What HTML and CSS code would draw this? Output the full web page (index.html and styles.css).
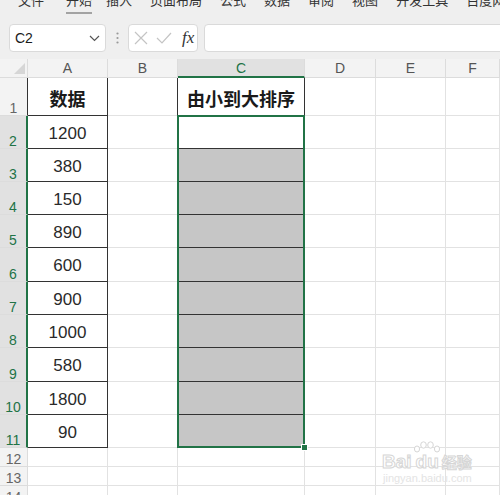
FILE: index.html
```html
<!DOCTYPE html>
<html lang="zh">
<head>
<meta charset="utf-8">
<title>排序</title>
<link rel="stylesheet" href="styles.css">
</head>
<body>
<div class="tabs">
  <span class="tab">文件</span>
  <span class="tab active">开始</span>
  <span class="tab">插入</span>
  <span class="tab">页面布局</span>
  <span class="tab">公式</span>
  <span class="tab">数据</span>
  <span class="tab">审阅</span>
  <span class="tab">视图</span>
  <span class="tab">开发工具</span>
  <span class="tab">百度网盘</span>
</div>
<div class="fbar">
  <div class="namebox">
    <span>C2</span>
    <svg width="11" height="7" viewBox="0 0 11 7"><path d="M1 1 L5.5 5.5 L10 1" fill="none" stroke="#555" stroke-width="1.2"/></svg>
  </div>
  <div class="dots">
    <svg width="3" height="12" viewBox="0 0 3 12"><circle cx="1.5" cy="1.5" r="1.1" fill="#999"/><circle cx="1.5" cy="6" r="1.1" fill="#999"/><circle cx="1.5" cy="10.5" r="1.1" fill="#999"/></svg>
  </div>
  <div class="fxbox">
    <svg width="14" height="14" viewBox="0 0 14 14"><path d="M1 1 L13 13 M13 1 L1 13" stroke="#c4c4c4" stroke-width="1.2"/></svg>
    <svg width="16" height="12" viewBox="0 0 16 12"><path d="M1 6 L6 11 L15 1" fill="none" stroke="#c4c4c4" stroke-width="1.2"/></svg>
    <span class="fx">fx</span>
  </div>
  <div class="finput"></div>
</div>
<div class="sheet">
  <div class="grid">
    <div class="c corner"><svg width="11" height="11" viewBox="0 0 11 11"><path d="M11 0 L11 11 L0 11 Z" fill="#d6d6d6"/></svg></div>
    <div class="c ch">A</div><div class="c ch">B</div><div class="c ch sel">C</div><div class="c ch">D</div><div class="c ch">E</div><div class="c ch">F</div>

    <div class="c rh dr">1</div><div class="c a head">数据</div><div class="c b"></div><div class="c cc head">由小到大排序</div><div class="c"></div><div class="c"></div><div class="c"></div>

    <div class="c rh sel">2</div><div class="c a num">1200</div><div class="c b"></div><div class="c cc"></div><div class="c"></div><div class="c"></div><div class="c"></div>
    <div class="c rh sel">3</div><div class="c a num">380</div><div class="c b"></div><div class="c cc gray"></div><div class="c"></div><div class="c"></div><div class="c"></div>
    <div class="c rh sel">4</div><div class="c a num">150</div><div class="c b"></div><div class="c cc gray"></div><div class="c"></div><div class="c"></div><div class="c"></div>
    <div class="c rh sel">5</div><div class="c a num">890</div><div class="c b"></div><div class="c cc gray"></div><div class="c"></div><div class="c"></div><div class="c"></div>
    <div class="c rh sel">6</div><div class="c a num">600</div><div class="c b"></div><div class="c cc gray"></div><div class="c"></div><div class="c"></div><div class="c"></div>
    <div class="c rh sel">7</div><div class="c a num">900</div><div class="c b"></div><div class="c cc gray"></div><div class="c"></div><div class="c"></div><div class="c"></div>
    <div class="c rh sel">8</div><div class="c a num">1000</div><div class="c b"></div><div class="c cc gray"></div><div class="c"></div><div class="c"></div><div class="c"></div>
    <div class="c rh sel">9</div><div class="c a num">580</div><div class="c b"></div><div class="c cc gray"></div><div class="c"></div><div class="c"></div><div class="c"></div>
    <div class="c rh sel">10</div><div class="c a num">1800</div><div class="c b"></div><div class="c cc gray"></div><div class="c"></div><div class="c"></div><div class="c"></div>
    <div class="c rh sel">11</div><div class="c a num">90</div><div class="c b"></div><div class="c cc gray"></div><div class="c"></div><div class="c"></div><div class="c"></div>

    <div class="c rh">12</div><div class="c"></div><div class="c"></div><div class="c"></div><div class="c"></div><div class="c"></div><div class="c"></div>
    <div class="c rh">13</div><div class="c"></div><div class="c"></div><div class="c"></div><div class="c"></div><div class="c"></div><div class="c"></div>
    <div class="c rh">14</div><div class="c"></div><div class="c"></div><div class="c"></div><div class="c"></div><div class="c"></div><div class="c"></div>
  </div>
  <div class="selection"><span class="handle"></span></div>
  <div class="wm">
    <svg class="paw" width="28" height="12" viewBox="0 0 28 12">
      <ellipse cx="4" cy="8" rx="2.6" ry="3" fill="#fff" stroke="#d6d6d6"/>
      <ellipse cx="10.5" cy="4" rx="2.8" ry="3.2" fill="#fff" stroke="#d6d6d6"/>
      <ellipse cx="17.5" cy="4" rx="2.8" ry="3.2" fill="#fff" stroke="#d6d6d6"/>
      <ellipse cx="24" cy="8" rx="2.6" ry="3" fill="#fff" stroke="#d6d6d6"/>
    </svg>
    <div class="wm-line"><span>Bai</span><span class="du">du</span><span class="jy">经验</span></div>
    <div class="wm-url">jingyan.baidu.com</div>
  </div>
</div>
</body>
</html>
```

FILE: styles.css
```css
* { box-sizing: border-box; }

html, body {
  margin: 0;
  padding: 0;
}

body {
  width: 500px;
  height: 495px;
  overflow: hidden;
  background: #efefef;
  font-family: "Noto Sans CJK SC", "Liberation Sans", sans-serif;
  color: #222;
}

/* ribbon tabs (cut off at the top) */
.tabs {
  height: 24px;
  display: flex;
  gap: 18px;
  padding-left: 18px;
  font-size: 13px;
  line-height: 13px;
  color: #333;
  white-space: nowrap;
}

.tab {
  margin-top: -7px;
  height: 21px;
  padding-bottom: 6px;
}

.tab.active {
  margin-left: 4px;
  margin-right: -4px;
  border-bottom: 2px solid #a3a3a3;
}

/* formula bar */
.fbar {
  height: 28px;
  display: flex;
  align-items: stretch;
  padding-left: 9px;
}

.namebox {
  width: 97px;
  background: #fff;
  border: 1px solid #dadada;
  border-radius: 4px;
  display: flex;
  align-items: center;
  justify-content: space-between;
  padding: 0 5px 0 5px;
  font-family: "Liberation Sans", sans-serif;
  font-size: 14px;
  color: #1a1a1a;
}

.dots {
  width: 22px;
  display: flex;
  align-items: center;
  justify-content: center;
}

.fxbox {
  width: 70px;
  margin-right: 6px;
  background: #fff;
  border: 1px solid #dadada;
  border-radius: 4px;
  display: flex;
  align-items: center;
  gap: 8px;
  padding-left: 5px;
}

.fx {
  font-family: "Liberation Serif", serif;
  font-style: italic;
  font-size: 17px;
  color: #333;
  margin-left: 2px;
}

.finput {
  flex: 1;
  margin-right: -10px;
  background: #fff;
  border: 1px solid #dadada;
  border-radius: 4px;
}

/* sheet */
.sheet {
  position: relative;
  margin-top: 7px;
  background: #fff;
  height: 436px;
}

.grid {
  display: grid;
  grid-template-columns: 28px 80px 70px 127px 71px 70px 1fr;
  grid-template-rows: 19px 38px 33px 33px 33px 33px 34px 33px 33px 34px 33px 33px 19px 19px 19px;
}

.c {
  border-right: 1px solid #e2e2e2;
  border-bottom: 1px solid #e2e2e2;
  background: #fff;
  display: flex;
  align-items: center;
  justify-content: center;
  overflow: hidden;
}

.corner {
  background: #f3f3f3;
  border-color: #dcdcdc;
  align-items: flex-end;
  justify-content: flex-end;
  padding: 0 2px 3px 0;
}

.ch {
  background: #f3f3f3;
  border-color: #dcdcdc;
  font-family: "Liberation Sans", sans-serif;
  font-size: 14px;
  color: #555;
}

.ch.sel {
  background: #e1e1e1;
  color: #217346;
  border-bottom: 2px solid #217346;
}

.rh {
  background: #f3f3f3;
  border-color: #dcdcdc;
  font-family: "Liberation Sans", sans-serif;
  font-size: 14px;
  line-height: 14px;
  color: #666;
  align-items: flex-end;
  padding-bottom: 0;
}

.rh.dr {
  border-right-color: #333;
}

.rh.sel {
  background: #e1e1e1;
  color: #217346;
  border-right: 2px solid #217346;
}

.a {
  border-right-color: #333;
  border-bottom-color: #333;
}

.b {
  border-right-color: #333;
}

.cc {
  border-right-color: #333;
  border-bottom-color: #333;
}

.gray {
  background: #c6c6c6;
}

.head {
  font-family: "Noto Sans CJK SC", sans-serif;
  font-weight: bold;
  font-size: 18px;
  color: #1a1a1a;
  padding-top: 3px;
}

.num {
  font-family: "Liberation Sans", sans-serif;
  font-size: 17px;
  color: #2a2a2a;
  padding-top: 3px;
}

/* selection overlay on C2:C11 */
.selection {
  position: absolute;
  left: 177px;
  top: 56px;
  width: 128px;
  height: 333px;
  border: 2px solid #217346;
}

.handle {
  position: absolute;
  right: -5px;
  bottom: -5px;
  width: 7px;
  height: 7px;
  background: #217346;
  border: 1px solid #fff;
}

/* watermark */
.wm {
  position: absolute;
  left: 382px;
  top: 382px;
  width: 92px;
  display: flex;
  flex-direction: column;
}

.paw {
  margin-left: 31px;
  display: block;
}

.wm-line {
  font-family: "Liberation Sans", sans-serif;
  font-weight: bold;
  font-size: 19px;
  line-height: 17px;
  color: #fff;
  -webkit-text-stroke: 1px #d6d6d6;
  display: flex;
}

.wm-line .du {
  margin-left: 4px;
}

.wm-line .jy {
  font-family: "Noto Sans CJK SC", sans-serif;
  font-size: 15px;
  margin-left: 3px;
}

.wm-url {
  font-family: "Liberation Sans", sans-serif;
  font-size: 11px;
  line-height: 13px;
  color: #e4e4e4;
  margin-top: 2px;
  margin-left: 1px;
}
```
